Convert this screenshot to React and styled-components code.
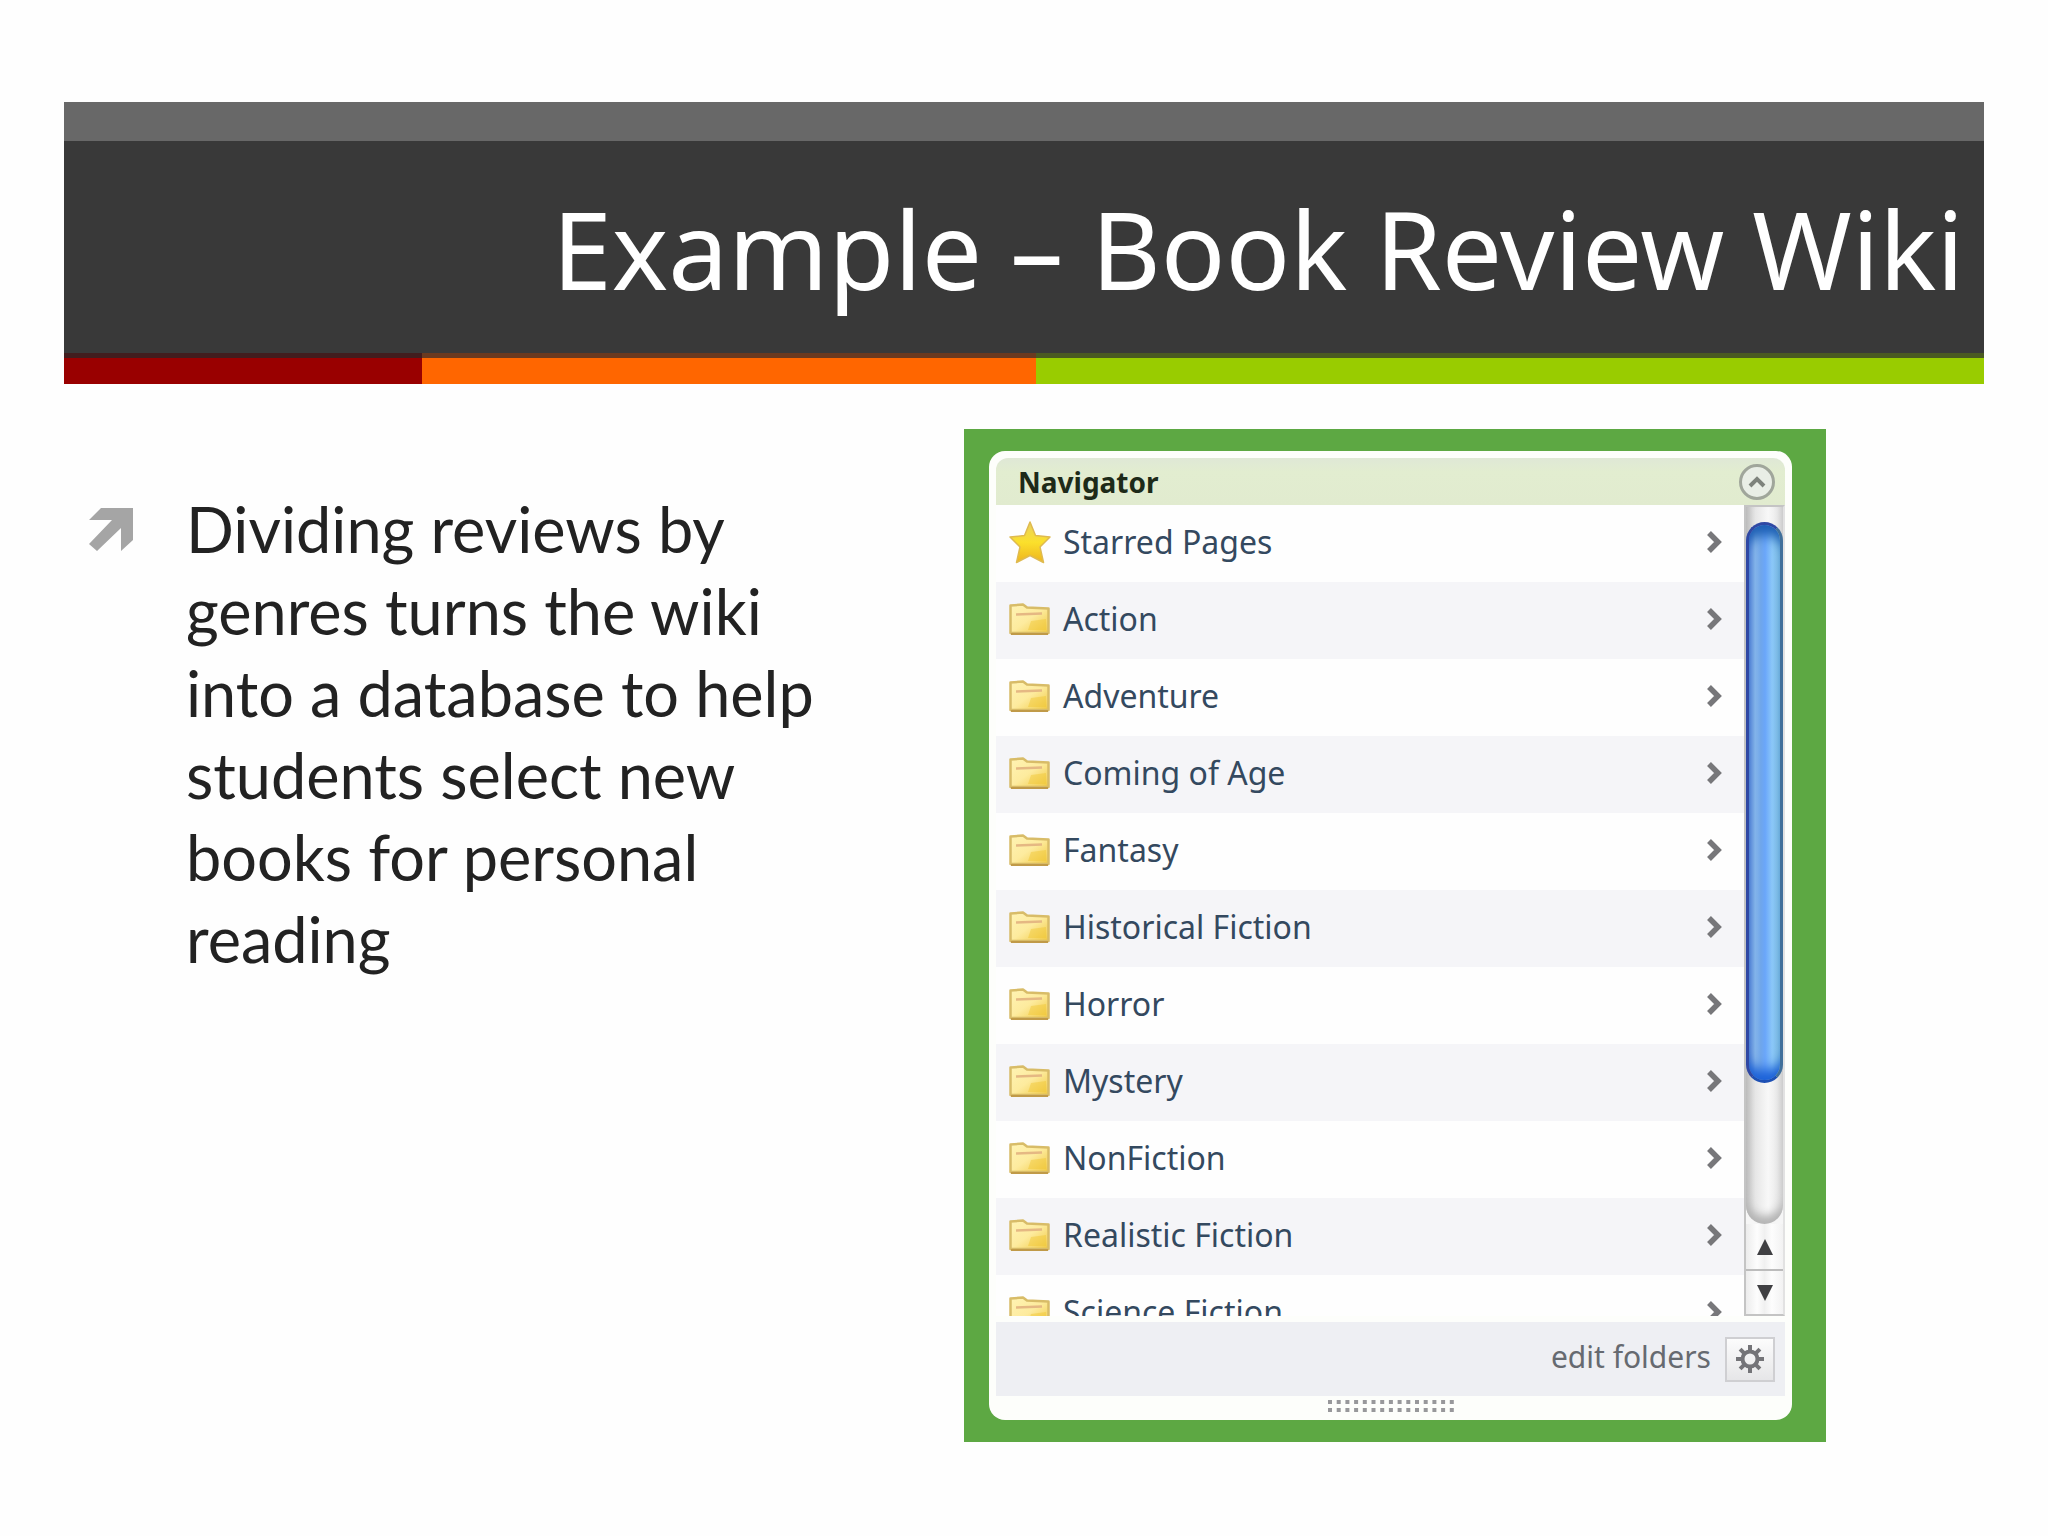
import React from 'react';
import styled, { createGlobalStyle } from 'styled-components';

const GlobalStyle = createGlobalStyle`
  * { box-sizing: border-box; }
  body { margin: 0; background: #fefefe; }
  button { font: inherit; padding: 0; cursor: pointer; }
`;

const Slide = styled.main`
  padding: 102px 64px 95px;
  font-family: Lato, 'Noto Sans', sans-serif;
`;

const Banner = styled.header`
  border-top: 39px solid #686868;
  background: #393939;
`;

const Title = styled.h1`
  margin: 0;
  padding: 42px 20px 38px;
  color: #fff;
  font-family: 'Noto Sans', 'Open Sans', sans-serif;
  font-size: 107px;
  font-weight: 400;
  line-height: 132px;
  text-align: right;
`;

const Stripes = styled.div`
  display: grid;
  grid-template-columns: 358fr 614fr 948fr;
`;

const Stripe = styled.div`
  height: 31px;
  background: ${(p) => p.$color};
  border-top: 5px solid ${(p) => p.$shade};
`;

const Content = styled.div`
  display: grid;
  grid-template-columns: 900fr 862fr 158fr;
  align-items: start;
  padding-top: 45px;
`;

const Points = styled.ul`
  margin: 0;
  padding: 59px 110px 0 25px;
  list-style: none;
`;

const Point = styled.li`
  display: flex;
  gap: 53px;
  color: #222;
  font-size: 63px;
  line-height: 82px;
`;

const PointText = styled.span`
  flex: 1;
`;

const PointArrow = styled.svg`
  flex: none;
  width: 44px;
  height: 44px;
  margin-top: 20px;
`;

const Frame = styled.section`
  padding: 22px 34px 22px 25px;
  background: #5da843;
`;

const Panel = styled.div`
  padding: 7px;
  border-radius: 16px;
  background: #fdfefb;
  font-family: 'Noto Sans', 'Open Sans', sans-serif;
`;

const PanelHead = styled.div`
  display: flex;
  align-items: center;
  justify-content: space-between;
  height: 47px;
  padding: 0 10px 0 22px;
  border-radius: 12px 12px 0 0;
  background: linear-gradient(#dfe8d6, #e2edd0 30%, #e1ebcf);
`;

const PanelTitle = styled.h2`
  margin: 0;
  color: #1d2a18;
  font-size: 28px;
  font-weight: 700;
  line-height: 36px;
`;

const RoundButton = styled.button`
  display: flex;
  width: 36px;
  height: 36px;
  align-items: center;
  justify-content: center;
  border: 3px solid #a0a69b;
  border-radius: 50%;
  background: #e9eee6;
`;

const ListArea = styled.div`
  display: flex;
  height: 811px;
  overflow: hidden;
`;

const FolderList = styled.nav`
  flex: 1;
`;

const FolderRow = styled.a`
  display: flex;
  height: 77px;
  align-items: center;
  padding: 0 21px 3px 12px;
  background: ${(p) => (p.$shaded ? '#f5f5f8' : '#fefefe')};
  color: #34495f;
  font-size: 32px;
  line-height: 40px;
  text-decoration: none;
`;

const FolderName = styled.span`
  flex: 1;
  padding-left: 11px;
`;

const Scrollbar = styled.div`
  display: flex;
  flex-direction: column;
  width: 41px;
  border: 2px solid #c4c4c4;
  border-right-color: #e2e2e2;
  background: #f6f6f6;
`;

const Track = styled.div`
  flex: 1;
  padding-top: 15px;
  border-radius: 0 0 19px 19px;
  background: linear-gradient(90deg, #c4c4c4, #e6e6e6 25%, #f8f8f8 60%, #e2e2e2);
  box-shadow: inset 0 -8px 8px #b4b4b4;
`;

const Thumb = styled.div`
  height: 561px;
  border: 3px solid #2f48a4;
  border-right-color: #41709a;
  border-bottom-color: #1d50b4;
  border-radius: 19px;
  background: linear-gradient(90deg, #5f8ad8, #86b6ea 20%, #6fa6ea 38%, #6aa6fa 52%, #8cc8f8 75%, #86c4e2);
  box-shadow: inset 0 16px 12px -6px #1d5fb4, inset 0 -16px 12px -6px #1c62d8;
`;

const StepButton = styled.button`
  display: flex;
  height: 45px;
  align-items: center;
  justify-content: center;
  border: 0;
  border-top: ${(p) => (p.$divided ? '2px solid #bcbcbc' : '0')};
  background: linear-gradient(90deg, #ececec, #fdfdfd 30%, #f0f0f0 50%, #fdfdfd 70%, #f2f2f2);
`;

const PanelFoot = styled.div`
  display: flex;
  height: 74px;
  align-items: center;
  justify-content: flex-end;
  gap: 14px;
  margin-top: 6px;
  padding: 0 10px 0 0;
  background: #eeeff3;
  color: #666a70;
  font-size: 30px;
  line-height: 38px;
`;

const EditLabel = styled.span`
  padding-bottom: 4px;
`;

const GearButton = styled.button`
  display: flex;
  width: 50px;
  height: 45px;
  align-items: center;
  justify-content: center;
  border: 2px solid #cfcfd2;
  background: linear-gradient(#fcfcfc, #e6e6e8);
`;

const Grip = styled.svg`
  display: block;
  width: 126px;
  height: 14px;
  margin: 3px auto 0;
`;

const Icon = styled.svg`
  display: block;
  flex: none;
`;

function StarIcon() {
  return (
    <Icon width="44" height="46" viewBox="0 0 44 46" aria-hidden="true">
      <defs>
        <linearGradient id="star" x1="0" y1="0" x2="0" y2="1">
          <stop offset="0" stopColor="#e8d060" />
          <stop offset="0.5" stopColor="#fbe02c" />
          <stop offset="1" stopColor="#eeb41c" />
        </linearGradient>
      </defs>
      <path
        d="M22 3 L27.500 16.500 L42 18 L32 28 L35.500 43.500 L22 36.500 L8.500 43.500 L12 28 L2 18 L16.500 16.500 Z"
        fill="url(#star)"
        stroke="#dfba50"
        strokeWidth="1.500"
        strokeLinejoin="round"
      />
    </Icon>
  );
}

function FolderIcon() {
  return (
    <Icon width="44" height="36" viewBox="0 0 44 36" aria-hidden="true">
      <defs>
        <linearGradient id="folder" x1="0" y1="0" x2="1" y2="1">
          <stop offset="0" stopColor="#fff3b4" />
          <stop offset="0.5" stopColor="#fdeb9e" />
          <stop offset="1" stopColor="#f0c840" />
        </linearGradient>
      </defs>
      <path
        d="M2.500 4.500 L15 3.500 L19 6.500 L40.500 7.500 L40.500 32 L2.500 32 Z"
        fill="url(#folder)"
        stroke="#d8bc68"
        strokeWidth="2.500"
        strokeLinejoin="round"
      />
      <path d="M8 13.500 L34 12.500" fill="none" stroke="#e5b883" strokeWidth="2.500" />
      <path d="M20 29 L23 20 L38 18 L38 29 Z" fill="#efc630" opacity="0.450" />
      <path d="M3 33 L40 33" stroke="#c09a48" strokeWidth="2" />
    </Icon>
  );
}

function ChevronIcon() {
  return (
    <Icon width="18" height="24" viewBox="0 0 18 24" aria-hidden="true">
      <path d="M4 3 L13 12 L4 21" fill="none" stroke="#77777a" strokeWidth="5.500" />
    </Icon>
  );
}

function GearIcon() {
  const spokes = [0, 45, 90, 135, 180, 225, 270, 315];
  return (
    <Icon width="30" height="30" viewBox="-15 -15 30 30" aria-hidden="true">
      <circle r="7.500" fill="none" stroke="#747478" strokeWidth="4" />
      {spokes.map((angle) => (
        <path key={angle} d="M0 -8 V-14" stroke="#747478" strokeWidth="4" transform={`rotate(${angle})`} />
      ))}
    </Icon>
  );
}

const stripes = [
  { color: '#990000', shade: '#421d1e' },
  { color: '#ff6600', shade: '#6b3a20' },
  { color: '#99cc00', shade: '#4a5a22' },
];

const folders = [
  'Starred Pages',
  'Action',
  'Adventure',
  'Coming of Age',
  'Fantasy',
  'Historical Fiction',
  'Horror',
  'Mystery',
  'NonFiction',
  'Realistic Fiction',
  'Science Fiction',
];

const gripColumns = Array.from({ length: 15 }, (_, i) => i);

export default function App() {
  return (
    <Slide>
      <GlobalStyle />
      <Banner>
        <Title>Example – Book Review Wiki</Title>
        <Stripes>
          {stripes.map((s) => (
            <Stripe key={s.color} $color={s.color} $shade={s.shade} />
          ))}
        </Stripes>
      </Banner>
      <Content>
        <Points>
          <Point>
            <PointArrow viewBox="0 0 44 44" aria-hidden="true">
              <path d="M12 0 H44 V32 L32 43 V20 L8 43 L0 36 L23 12 H0 Z" fill="#a5a5a5" />
            </PointArrow>
            <PointText>
              Dividing reviews by genres turns the wiki into a database to help students select new books for personal
              reading
            </PointText>
          </Point>
        </Points>
        <Frame>
          <Panel>
            <PanelHead>
              <PanelTitle>Navigator</PanelTitle>
              <RoundButton type="button" aria-label="Collapse">
                <Icon width="18" height="12" viewBox="0 0 18 12" aria-hidden="true">
                  <path d="M2 10 L9 3 L16 10" fill="none" stroke="#7e837c" strokeWidth="4" />
                </Icon>
              </RoundButton>
            </PanelHead>
            <ListArea>
              <FolderList aria-label="Folders">
                {folders.map((name, i) => (
                  <FolderRow key={name} href="#" $shaded={i % 2 === 1}>
                    {i === 0 ? <StarIcon /> : <FolderIcon />}
                    <FolderName>{name}</FolderName>
                    <ChevronIcon />
                  </FolderRow>
                ))}
              </FolderList>
              <Scrollbar>
                <Track>
                  <Thumb />
                </Track>
                <StepButton type="button" aria-label="Scroll up">
                  <Icon width="18" height="18" viewBox="0 0 18 18" aria-hidden="true">
                    <path d="M9 1 L17 17 H1 Z" fill="#3f3f42" />
                  </Icon>
                </StepButton>
                <StepButton type="button" aria-label="Scroll down" $divided>
                  <Icon width="18" height="18" viewBox="0 0 18 18" aria-hidden="true">
                    <path d="M1 1 H17 L9 17 Z" fill="#3f3f42" />
                  </Icon>
                </StepButton>
              </Scrollbar>
            </ListArea>
            <PanelFoot>
              <EditLabel>edit folders</EditLabel>
              <GearButton type="button" aria-label="Folder settings">
                <GearIcon />
              </GearButton>
            </PanelFoot>
            <Grip viewBox="0 0 126 14" aria-hidden="true">
              {gripColumns.map((i) => (
                <g key={i} fill="#98989b">
                  <rect x={i * 8.7} y="1" width="4" height="4" />
                  <rect x={i * 8.7} y="9" width="4" height="4" />
                </g>
              ))}
            </Grip>
          </Panel>
        </Frame>
      </Content>
    </Slide>
  );
}
